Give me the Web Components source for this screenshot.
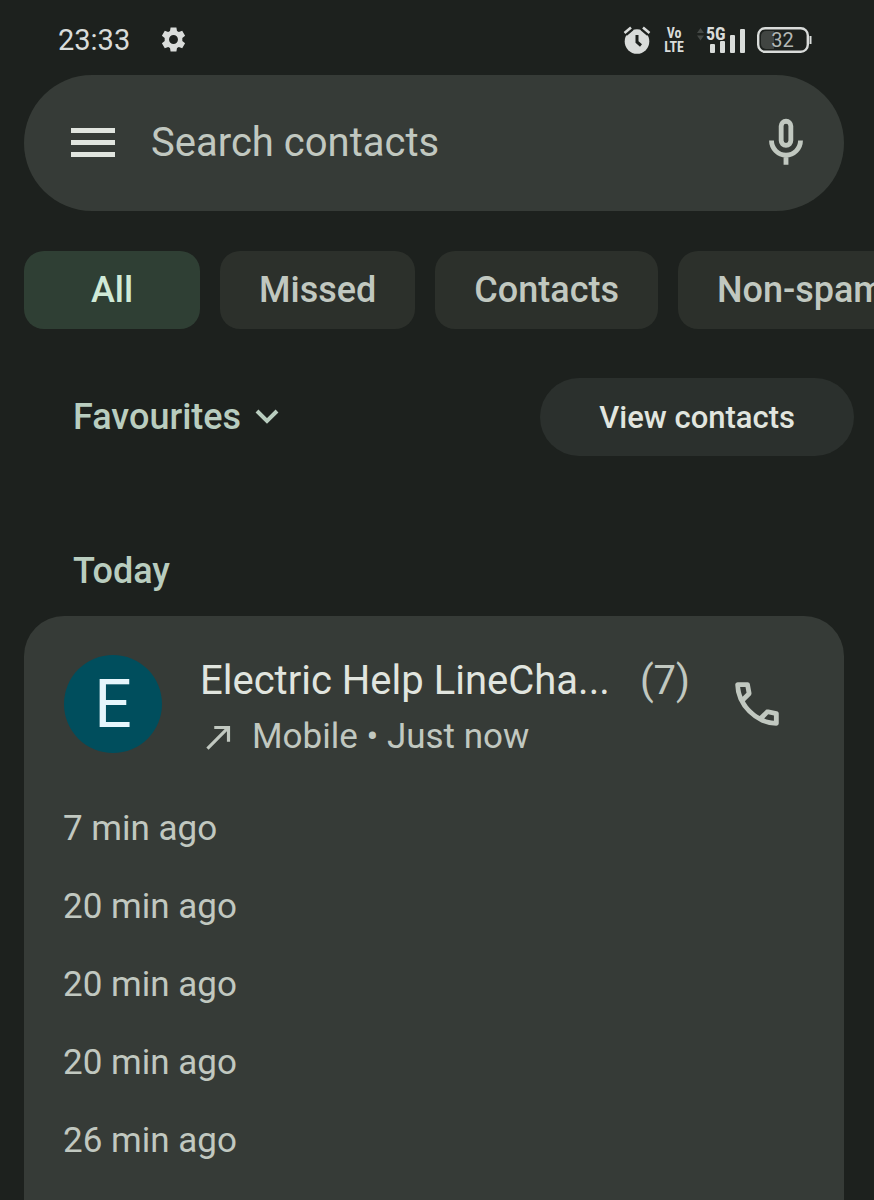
<!DOCTYPE html>
<html lang="en">
<head>
<meta charset="utf-8">
<meta name="viewport" content="width=device-width, initial-scale=1">
<title>Phone</title>
<style>
  :root {
    --bg: #1d211e;
    --surface: #363b37;
    --chip: #2c302b;
    --chip-active: #2f3f34;
    --pill: #2b302d;
    --text: #e1e5df;
    --text-dim: #c1c8c0;
    --accent: #b9cdbf;
  }

  body {
    margin: 0;
    background: var(--bg);
    color: var(--text);
    font-family: Roboto, "Liberation Sans", sans-serif;
  }
</style>
</head>
<body>

<phone-app>
  <status-bar slot="status" time="23:33" battery="32"></status-bar>
  <search-bar placeholder="Search contacts"></search-bar>
  <chip-row>
    <filter-chip active>All</filter-chip>
    <filter-chip>Missed</filter-chip>
    <filter-chip>Contacts</filter-chip>
    <filter-chip>Non-spam</filter-chip>
  </chip-row>
  <favourites-bar>
    Favourites
    <span slot="action">View contacts</span>
  </favourites-bar>
  <day-heading>Today</day-heading>
  <call-card initial="E" count="(7)">
    <span slot="name">Electric Help LineCha...</span>
    <span slot="detail">Mobile • Just now</span>
    <call-time>7 min ago</call-time>
    <call-time>20 min ago</call-time>
    <call-time>20 min ago</call-time>
    <call-time>20 min ago</call-time>
    <call-time>26 min ago</call-time>
  </call-card>
</phone-app>

<script>
const resetStyles = `
  :host, * { box-sizing: border-box; }
  svg { display: block; flex: none; }
  button {
    margin: 0;
    padding: 0;
    border: 0;
    background: none;
    color: inherit;
    font: inherit;
    cursor: pointer;
  }
`;

// Small helper so every element only has to describe its own markup
class BaseElement extends HTMLElement {
  constructor() {
    super();
    this.attachShadow({ mode: "open" });
  }

  connectedCallback() {
    this.shadowRoot.innerHTML = `<style>${resetStyles}${this.styles()}</style>${this.render()}`;
  }

  styles() {
    return "";
  }

  render() {
    return "<slot></slot>";
  }
}

class PhoneApp extends BaseElement {
  styles() {
    return `
      :host {
        display: flex;
        flex-direction: column;
        min-height: 100vh;
        overflow: hidden;
      }
      main {
        flex: 1;
        display: flex;
        flex-direction: column;
      }
    `;
  }

  render() {
    return `<slot name="status"></slot><main><slot></slot></main>`;
  }
}

class StatusBar extends BaseElement {
  styles() {
    return `
      :host {
        display: flex;
        align-items: center;
        justify-content: space-between;
        height: 75px;
        padding: 4px 62px 0 58px;
        color: #d9dcda;
      }
      .group { display: flex; align-items: center; }
      .left { gap: 29px; }
      .right { gap: 12px; }
      .time { font-size: 29px; line-height: 32px; }
      .volte {
        width: 22px;
        font: bold 14px/14px "Liberation Sans Narrow", "Roboto Condensed", Roboto, sans-serif;
        text-align: center;
      }
      .volte span { display: block; }
      .signal, .battery { position: relative; }
      .signal b {
        position: absolute;
        left: 9px;
        top: 0;
        font: bold 18px/16px "Liberation Sans Narrow", "Roboto Condensed", Roboto, sans-serif;
      }
      .battery span {
        position: absolute;
        inset: 0 4px 0 0;
        font-size: 20px;
        line-height: 26px;
        text-align: center;
        color: #b4b8b5;
      }
    `;
  }

  render() {
    return `
      <div class="group left">
        <span class="time">${this.getAttribute("time")}</span>
        <svg width="29" height="29" viewBox="0 0 24 24" fill="currentColor" aria-hidden="true">
          <path fill-rule="evenodd" d="M9.600 2h4.800l.5 2.900 1.500.9 2.800-1.100 2.400 4.100-2.300 1.900v2.600l2.300 1.900-2.400 4.100-2.800-1.100-1.500.9-.5 2.900H9.600l-.5-2.900-1.500-.9-2.800 1.100-2.400-4.100 2.300-1.900v-2.600L2.400 8.800l2.400-4.100 2.800 1.100 1.500-.9zM12 8.300a3.700 3.700 0 1 0 0 7.400 3.700 3.700 0 0 0 0-7.400z"/>
        </svg>
      </div>
      <div class="group right">
        <svg width="28" height="28" viewBox="0 0 28 28" fill="none" aria-hidden="true">
          <circle cx="14" cy="15.500" r="12.300" fill="currentColor"/>
          <path d="M2 7.500 8.500 2M26 7.500 19.500 2" stroke="#1d211e" stroke-width="6"/>
          <path d="M1.500 7 8 1.500M26.500 7 20 1.500" stroke="currentColor" stroke-width="2.600"/>
          <path d="M14 9v7l4 3.500" stroke="#1d211e" stroke-width="3"/>
        </svg>
        <div class="volte"><span>Vo</span><span>LTE</span></div>
        <div class="signal">
          <svg width="48" height="28" viewBox="0 0 48 28" fill="currentColor" aria-hidden="true">
            <path d="M0 7 3.500 2 7 7zM0 9.500h7L3.500 14.500z" fill="#444845"/>
            <rect x="13" y="18" width="5" height="9" rx="1"/>
            <rect x="23" y="15" width="5" height="12" rx="1"/>
            <rect x="33" y="9" width="5" height="18" rx="1"/>
            <rect x="43" y="3" width="5" height="24" rx="1"/>
          </svg>
          <b>5G</b>
        </div>
        <div class="battery">
          <svg width="55" height="26" viewBox="0 0 55 26" fill="none" aria-hidden="true">
            <path d="M9 4h8v18H9a5 5 0 0 1-5-5V9a5 5 0 0 1 5-5z" fill="#414542"/>
            <rect x="1.200" y="1.200" width="49.600" height="23.600" rx="7" stroke="currentColor" stroke-width="2.400"/>
            <path d="M53.500 9v8" stroke="currentColor" stroke-width="2"/>
          </svg>
          <span>${this.getAttribute("battery")}</span>
        </div>
      </div>
    `;
  }
}

class SearchBar extends BaseElement {
  styles() {
    return `
      :host {
        display: flex;
        align-items: center;
        height: 136px;
        margin: 0 30px 0 24px;
        padding: 0 29px 0 47px;
        border-radius: 68px;
        background: var(--surface);
      }
      input {
        flex: 1;
        min-width: 0;
        margin: 0 16px 0 36px;
        padding: 0;
        border: 0;
        outline: 0;
        background: none;
        color: var(--text);
        font: inherit;
        font-size: 40px;
        line-height: 56px;
      }
      input::placeholder { color: var(--text-dim); opacity: 1; }
      .mic { color: var(--text-dim); }
    `;
  }

  render() {
    const label = this.getAttribute("placeholder");
    return `
      <button aria-label="Menu">
        <svg width="44" height="30" viewBox="0 0 44 30" fill="currentColor">
          <path d="M0 0h44v5H0zM0 12h44v5H0zM0 24h44v5H0z"/>
        </svg>
      </button>
      <input type="search" placeholder="${label}" aria-label="${label}">
      <button class="mic" aria-label="Voice search">
        <svg width="58" height="58" viewBox="0 0 24 24" fill="none" stroke="currentColor" stroke-width="2">
          <rect x="10" y="3" width="4" height="10" rx="2"/>
          <path d="M6 11a6 6 0 0 0 12 0M12 17v4"/>
        </svg>
      </button>
    `;
  }
}

class ChipRow extends BaseElement {
  styles() {
    return `
      :host {
        display: flex;
        gap: 20px;
        margin-top: 40px;
        padding-left: 24px;
        overflow: hidden;
      }
    `;
  }
}

class FilterChip extends BaseElement {
  styles() {
    return `
      :host { display: block; flex: none; }
      button {
        height: 78px;
        min-width: 176px;
        padding: 0 39px;
        border-radius: 20px;
        background: var(--chip);
        color: var(--text-dim);
        font-size: 36px;
        font-weight: 500;
        white-space: nowrap;
      }
      :host([active]) button {
        background: var(--chip-active);
        color: #d0ead7;
      }
    `;
  }

  render() {
    return `<button aria-pressed="${this.hasAttribute("active")}"><slot></slot></button>`;
  }
}

class FavouritesBar extends BaseElement {
  styles() {
    return `
      :host {
        display: flex;
        align-items: center;
        justify-content: space-between;
        margin-top: 49px;
        padding: 0 20px 0 73px;
      }
      .toggle {
        display: flex;
        align-items: center;
        gap: 14px;
        color: var(--accent);
        font-size: 36px;
        font-weight: 500;
      }
      .action {
        height: 78px;
        padding: 0 59px;
        border-radius: 39px;
        background: var(--pill);
        font-size: 31px;
        font-weight: 500;
      }
    `;
  }

  render() {
    return `
      <button class="toggle" aria-expanded="false">
        <span><slot></slot></span>
        <svg width="24" height="16" viewBox="0 0 24 16" fill="none" stroke="currentColor" stroke-width="4">
          <path d="m2 2 10 10L22 2"/>
        </svg>
      </button>
      <button class="action"><slot name="action"></slot></button>
    `;
  }
}

class DayHeading extends BaseElement {
  styles() {
    return `
      :host { display: block; margin-top: 90px; padding: 0 73px; }
      h2 {
        margin: 0 0 20px;
        color: var(--accent);
        font-size: 36px;
        font-weight: 500;
        line-height: 50px;
      }
    `;
  }

  render() {
    return `<h2><slot></slot></h2>`;
  }
}

class CallCard extends BaseElement {
  styles() {
    return `
      :host {
        display: block;
        flex: 1;
        margin: 0 30px 0 24px;
        border-radius: 40px 40px 0 0;
        background: var(--surface);
      }
      header {
        display: flex;
        align-items: flex-start;
        padding: 37px 38px 25px 40px;
      }
      .avatar, .call {
        display: flex;
        align-items: center;
        justify-content: center;
        flex: none;
        width: 98px;
        height: 98px;
        margin-top: 2px;
      }
      .avatar {
        border-radius: 50%;
        background: #004e5d;
        color: #e6f6fc;
        font-size: 66px;
      }
      .call { color: var(--text-dim); }
      .info {
        flex: 1;
        min-width: 0;
        margin: 0 18px 0 38px;
        line-height: 56px;
        white-space: nowrap;
      }
      .title {
        display: flex;
        justify-content: space-between;
        font-size: 40px;
      }
      .count, .detail { color: var(--text-dim); }
      .detail {
        display: flex;
        align-items: center;
        gap: 14px;
        font-size: 35px;
      }
    `;
  }

  render() {
    return `
      <header>
        <div class="avatar">${this.getAttribute("initial")}</div>
        <div class="info">
          <div class="title">
            <slot name="name"></slot>
            <span class="count">${this.getAttribute("count")}</span>
          </div>
          <div class="detail">
            <svg width="38" height="38" viewBox="0 0 24 24" fill="currentColor" aria-hidden="true">
              <path d="M9 5v2h6.590L4 18.590 5.410 20 17 8.410V15h2V5z"/>
            </svg>
            <slot name="detail"></slot>
          </div>
        </div>
        <button class="call" aria-label="Call">
          <svg width="58" height="58" viewBox="0 0 24 24" fill="currentColor">
            <path d="M19.950 21q-3.125 0-6.175-1.362T8.225 15.774 4.363 10.225 3 4.050q0-.45.3-.75T4.050 3H8.100q.35 0 .625.238t.325.562l.65 3.500q.05.4-.025.675T9.400 8.450L6.975 10.900q.5.925 1.187 1.787T9.675 14.350q.775.775 1.625 1.438T13.100 17l2.350-2.350q.225-.225.588-.337t.712-.063l3.450.7q.35.1.575.363T21 15.900v4.050q0 .45-.3.75t-.75.3ZM6.025 9l1.650-1.650L7.250 5H5.025q.125 1.025.35 2.025T6.025 9Zm8.950 8.950q.975.425 1.988.675T19 18.950v-2.200l-2.350-.475-1.675 1.675Z"/>
          </svg>
        </button>
      </header>
      <slot></slot>
    `;
  }
}

class CallTime extends BaseElement {
  styles() {
    return `
      :host {
        display: block;
        padding: 0 39px;
        color: var(--text-dim);
        font-size: 35px;
        line-height: 78px;
      }
    `;
  }
}

customElements.define("phone-app", PhoneApp);
customElements.define("status-bar", StatusBar);
customElements.define("search-bar", SearchBar);
customElements.define("chip-row", ChipRow);
customElements.define("filter-chip", FilterChip);
customElements.define("favourites-bar", FavouritesBar);
customElements.define("day-heading", DayHeading);
customElements.define("call-card", CallCard);
customElements.define("call-time", CallTime);
</script>
</body>
</html>
